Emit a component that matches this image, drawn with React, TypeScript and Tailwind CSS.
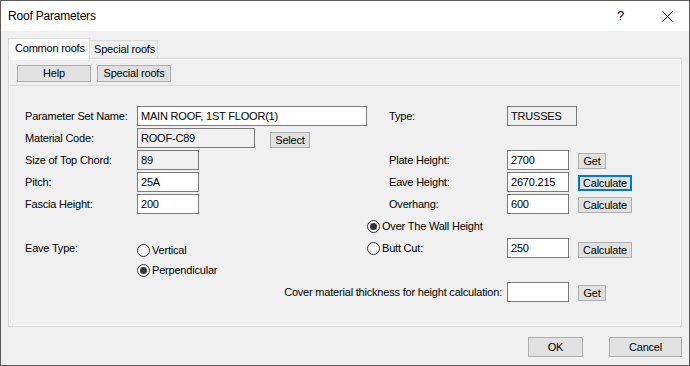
import React from 'react'

const font = { fontFamily: '"Liberation Sans", Arial, sans-serif' }

function Btn({ children, w, focused, h = 'h-[16px]' }: { children: React.ReactNode; w: string; focused?: boolean; h?: string }) {
  return (
    <div
      className={`${w} ${h} flex items-center justify-center bg-[#e1e1e1] text-black leading-none ${
        focused ? 'border-2 border-[#0078d7]' : 'border border-[#adadad]'
      }`}
    >
      {children}
    </div>
  )
}

function Box({ value, w, ro }: { value: string; w: string; ro?: boolean }) {
  return (
    <div
      className={`${w} h-[20px] flex items-center px-[3px] border leading-none ${
        ro ? 'bg-[#f0f0f0] border-[#7a7a7a]' : 'bg-white border-[#7a7a7a]'
      }`}
    >
      {value}
    </div>
  )
}

function Radio({ label, checked }: { label: string; checked?: boolean }) {
  return (
    <div className="flex items-center gap-[2px]">
      <div className="w-[13px] h-[13px] rounded-full border border-[#333] bg-white flex items-center justify-center">
        {checked && <div className="w-[7px] h-[7px] rounded-full bg-[#333]" />}
      </div>
      <span>{label}</span>
    </div>
  )
}

function Row({ children }: { children: React.ReactNode }) {
  return <div className="flex h-[22px] items-center">{children}</div>
}

function Left({ label, children }: { label?: string; children?: React.ReactNode }) {
  return (
    <div className="w-[342px] flex items-center shrink-0">
      <div className="w-[112px] shrink-0">{label}</div>
      {children}
    </div>
  )
}

function Right({ label, value, button, focused, ro, w = 'w-[62px]' }: { label: string; value: string; button?: string; focused?: boolean; ro?: boolean; w?: string }) {
  return (
    <div className="flex items-center pl-[22px]">
      <div className="w-[118px] shrink-0">{label}</div>
      <Box value={value} w={w} ro={ro} />
      {button && (
        <div className="ml-[9px] mt-[2px]">
          <Btn w={button === 'Get' ? 'w-[28px]' : 'w-[54px]'} focused={focused}>{button}</Btn>
        </div>
      )}
    </div>
  )
}

export default function App() {
  return (
    <div
      style={font}
      className="w-[690px] h-[366px] flex flex-col border border-[#5c5c5c] text-[11px] tracking-[-0.2px] text-black bg-[#f0f0f0] overflow-hidden"
    >
      <div className="h-[30px] bg-white flex items-center shrink-0">
        <span className="pl-[7px] text-[12px] tracking-[-0.2px]">Roof Parameters</span>
        <span className="ml-auto mr-[38px] text-[13px]">?</span>
        <svg width="11" height="11" viewBox="0 0 11 11" className="mr-[16px]">
          <path d="M0.5 0.5 L10.5 10.5 M10.5 0.5 L0.5 10.5" stroke="#000" strokeWidth="1" />
        </svg>
      </div>

      <div className="flex-1 flex flex-col pl-[7px] pr-[7px] pt-[7px]">
        <div className="flex items-end h-[21px] relative z-10">
          <div className="h-[21px] w-[82px] bg-[#fcfcfc] border border-b-0 border-[#d9d9d9] flex items-center pl-[6px] pb-[1px]">
            Common roofs
          </div>
          <div className="h-[18px] w-[68px] border border-l-0 border-b-0 border-[#d9d9d9] flex items-center pl-[4px] mb-[1px]">
            Special roofs
          </div>
        </div>
        <div className="h-[269px] -mt-[1px] border border-[#d9d9d9] shadow-[inset_1px_1px_0_#fff,inset_-1px_-1px_0_#fff] flex flex-col">
          <div className="h-[27px] flex pl-[7px] pt-[6px] gap-[6px] border-b border-[#d9d9d9] mx-[1px]">
            <Btn w="w-[74px]" h="h-[17px]">Help</Btn>
            <Btn w="w-[74px]" h="h-[17px]">Special roofs</Btn>
          </div>
          <div className="flex flex-col pl-[16px] pt-[19px]">
            <Row>
              <Left label="Parameter Set Name:">
                <Box value="MAIN ROOF, 1ST FLOOR(1)" w="w-[231px]" />
              </Left>
              <Right label="Type:" value="TRUSSES" ro w="w-[70px]" />
            </Row>
            <Row>
              <Left label="Material Code:">
                <Box value="ROOF-C89" w="w-[118px]" ro />
                <div className="ml-[15px] mt-[4px]">
                  <Btn w="w-[40px]">Select</Btn>
                </div>
              </Left>
            </Row>
            <Row>
              <Left label="Size of Top Chord:">
                <Box value="89" w="w-[62px]" ro />
              </Left>
              <Right label="Plate Height:" value="2700" button="Get" />
            </Row>
            <Row>
              <Left label="Pitch:">
                <Box value="25A" w="w-[62px]" />
              </Left>
              <Right label="Eave Height:" value="2670.215" button="Calculate" focused />
            </Row>
            <Row>
              <Left label="Fascia Height:">
                <Box value="200" w="w-[62px]" />
              </Left>
              <Right label="Overhang:" value="600" button="Calculate" />
            </Row>
            <Row>
              <Left />
              <Radio label="Over The Wall Height" checked />
            </Row>
            <Row>
              <Left label="Eave Type:">
                <div className="mt-[4px]">
                  <Radio label="Vertical" />
                </div>
              </Left>
              <div className="w-[140px] shrink-0">
                <Radio label="Butt Cut:" />
              </div>
              <Box value="250" w="w-[62px]" />
              <div className="ml-[9px] mt-[4px]">
                <Btn w="w-[54px]">Calculate</Btn>
              </div>
            </Row>
            <Row>
              <Left>
                <Radio label="Perpendicular" checked />
              </Left>
            </Row>
            <Row>
              <div className="w-[482px] shrink-0 text-right pr-[5px]">Cover material thickness for height calculation:</div>
              <Box value="" w="w-[62px]" />
              <div className="ml-[9px] mt-[2px]">
                <Btn w="w-[28px]">Get</Btn>
              </div>
            </Row>
          </div>
        </div>
        <div className="flex justify-end gap-[26px] mt-[10px]">
          <Btn w="w-[55px]" h="h-[20px]">OK</Btn>
          <Btn w="w-[73px]" h="h-[20px]">Cancel</Btn>
        </div>
      </div>
    </div>
  )
}
